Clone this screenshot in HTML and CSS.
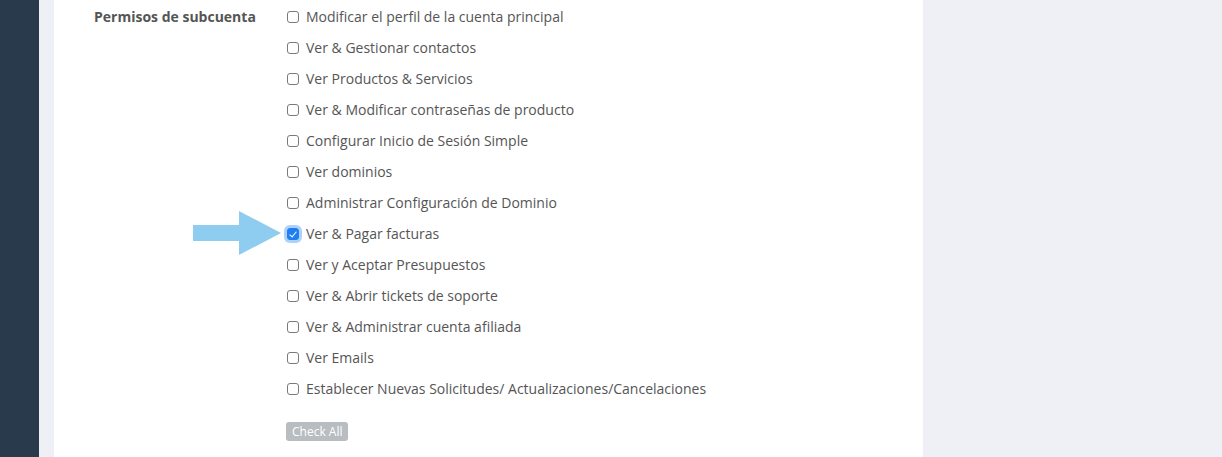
FILE: index.html
```html
<!DOCTYPE html>
<html lang="es">
<head>
    <meta charset="UTF-8">
    <meta name="viewport" content="width=device-width, initial-scale=1">
    <title>Permisos de subcuenta</title>
    <link rel="stylesheet" href="styles.css">
</head>
<body>
    <div class="sidebar"></div>

    <div class="main">
        <div class="panel">
            <div class="form-row">
                <div class="form-label">Permisos de subcuenta</div>
                <div class="form-options">
                    <label class="opt"><input type="checkbox"> Modificar el perfil de la cuenta principal</label>
                    <label class="opt"><input type="checkbox"> Ver &amp; Gestionar contactos</label>
                    <label class="opt"><input type="checkbox"> Ver Productos &amp; Servicios</label>
                    <label class="opt"><input type="checkbox"> Ver &amp; Modificar contraseñas de producto</label>
                    <label class="opt"><input type="checkbox"> Configurar Inicio de Sesión Simple</label>
                    <label class="opt"><input type="checkbox"> Ver dominios</label>
                    <label class="opt"><input type="checkbox"> Administrar Configuración de Dominio</label>
                    <label class="opt">
                        <!-- annotation arrow pointing at the checked box -->
                        <svg class="arrow" width="90" height="44" viewBox="0 0 90 44">
                            <polygon points="0,14 46,14 46,0 88,22 46,44 46,30 0,30" fill="#8ecdef"/>
                        </svg>
                        <input type="checkbox" checked> Ver &amp; Pagar facturas
                    </label>
                    <label class="opt"><input type="checkbox"> Ver y Aceptar Presupuestos</label>
                    <label class="opt"><input type="checkbox"> Ver &amp; Abrir tickets de soporte</label>
                    <label class="opt"><input type="checkbox"> Ver &amp; Administrar cuenta afiliada</label>
                    <label class="opt"><input type="checkbox"> Ver Emails</label>
                    <label class="opt"><input type="checkbox"> Establecer Nuevas Solicitudes/ Actualizaciones/Cancelaciones</label>

                    <button class="btn-check-all" type="button">Check All</button>
                </div>
            </div>
        </div>
    </div>
</body>
</html>
```

FILE: styles.css
```css
* {
    margin: 0;
    padding: 0;
    box-sizing: border-box;
}

html, body {
    height: 100%;
    overflow: hidden;
}

body {
    display: flex;
    background: #eff0f5;
    font-family: 'Open Sans', sans-serif;
    font-size: 14px;
    color: #555;
}

.sidebar {
    width: 39px;
    flex-shrink: 0;
    background: #283a4b;
}

.main {
    padding-left: 15px;
}

.panel {
    width: 869px;
    height: 100%;
    background: #fff;
}

.form-row {
    display: flex;
    padding: 6px 0 0 40px;
}

.form-label {
    width: 192px;
    font-size: 14px;
    font-weight: bold;
    color: #555;
    line-height: 21px;
}

.form-options {
    display: flex;
    flex-direction: column;
    align-items: flex-start;
    gap: 10px;
}

.opt {
    display: flex;
    align-items: center;
    height: 21px;
    line-height: 21px;
    position: relative;
}

.opt input {
    appearance: none;
    width: 12px;
    height: 12px;
    margin: 0 7px 0 1px;
    border: 1px solid #7a7a7a;
    border-radius: 3px;
    background: #fff;
    flex-shrink: 0;
}

.opt input:checked {
    background: #1d7ff0;
    border-color: #1d7ff0;
    box-shadow: 0 0 0 3px rgba(110, 170, 245, 0.55);
    position: relative;
}

.opt input:checked::after {
    content: '';
    position: absolute;
    left: 3px;
    top: 1px;
    width: 3px;
    height: 6px;
    border: solid #fff;
    border-width: 0 1.5px 1.5px 0;
    transform: rotate(40deg);
}

.arrow {
    position: absolute;
    left: -93px;
    top: -12px;
}

.btn-check-all {
    margin-top: 13px;
    background: #b8bdc2;
    color: #fff;
    border: none;
    border-radius: 3px;
    font-family: 'Open Sans', sans-serif;
    font-size: 12px;
    padding: 1px 6px;
    line-height: 17px;
}
```
